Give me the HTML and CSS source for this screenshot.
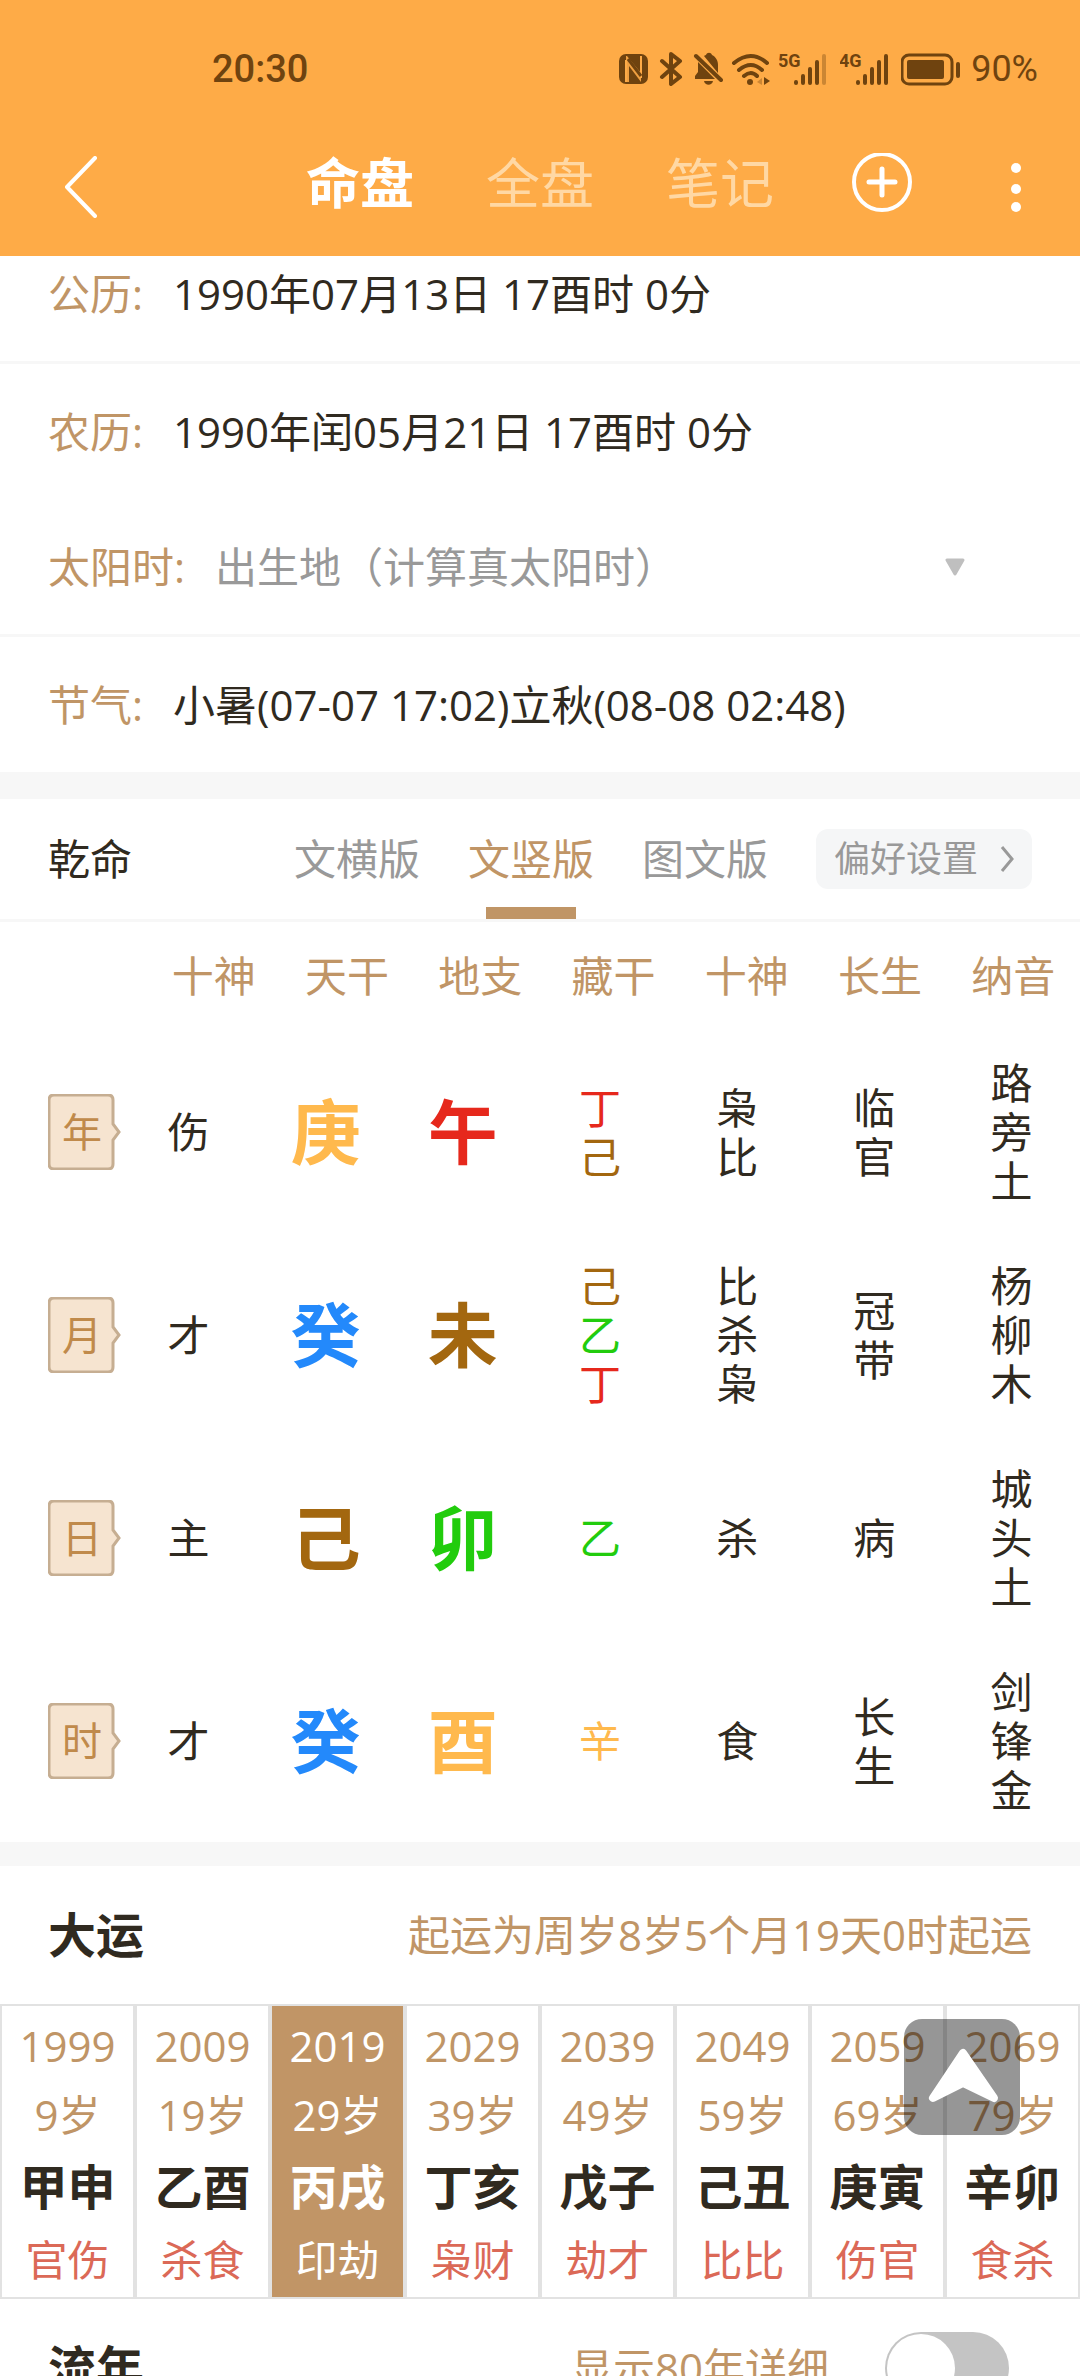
FILE: index.html
```html
<!DOCTYPE html>
<html lang="zh-CN">
<head>
<meta charset="utf-8">
<meta name="viewport" content="width=device-width, initial-scale=1">
<title>命盘</title>
<link rel="stylesheet" href="styles.css">
</head>
<body>
<div class="app">
  <header class="top">
    <div class="status">
      <span class="clock">20:30</span>
      <div class="status-icons">
        <svg width="31" height="34" viewBox="0 0 31 34" aria-hidden="true">
          <rect x="1" y="2" width="29" height="30" rx="7" fill="currentColor"/>
          <path d="M8 30V8M23 4v22" fill="none" stroke="#feab47" stroke-width="2"/>
          <path d="M9 4l14 17v9L11 14v16H8V4z" fill="#feab47" opacity=".9"/>
          <path d="M10 7l13 17" stroke="currentColor" stroke-width="3"/>
        </svg>
        <svg width="24" height="34" viewBox="0 0 24 34" aria-hidden="true">
          <path d="M3 9l18 16-9 7V2l9 7L3 25" fill="none" stroke="currentColor" stroke-width="4" stroke-linejoin="round" stroke-linecap="round"/>
        </svg>
        <svg width="30" height="34" viewBox="0 0 30 34" aria-hidden="true">
          <path d="M11 4c1-1 2-1 2-1 1-3 5-3 6 0 4 2 6 6 6 10v8zM5 10l17 17H2v-3l3-4z" fill="currentColor"/>
          <path d="M11 29h9c-1 5-8 5-9 0z" fill="currentColor"/>
          <path d="M3 4l25 24" stroke="currentColor" stroke-width="4" stroke-linecap="round"/>
        </svg>
        <svg width="36" height="34" viewBox="0 0 36 34" class="spill" aria-hidden="true">
          <path d="M1 11q17-14 33 0M6 18q12-10 23 0M11 24q7-6 13 0" fill="none" stroke="currentColor" stroke-width="4" stroke-linecap="round"/>
          <circle cx="17" cy="30" r="3" fill="currentColor"/>
          <path d="M29 26v7l-5-3z" fill="currentColor" opacity=".35"/>
          <path d="M31 25v8l6-4z" fill="currentColor"/>
        </svg>
        <svg width="51" height="34" viewBox="0 0 51 34" aria-hidden="true">
          <text x="-1" y="15" class="net">5G</text>
          <path d="M17 30v1M24 24v7M31 17v14M38 10v21" stroke="currentColor" stroke-width="4" stroke-linecap="round"/>
          <path d="M45 4v27" stroke="currentColor" stroke-width="4" stroke-linecap="round" opacity=".35"/>
        </svg>
        <svg width="51" height="34" viewBox="0 0 51 34" aria-hidden="true">
          <text x="-1" y="15" class="net">4G</text>
          <path d="M18 30v1M25 24v7M32 17v14M39 10v21M46 4v27" stroke="currentColor" stroke-width="4" stroke-linecap="round"/>
        </svg>
        <svg width="60" height="34" viewBox="0 0 60 34" aria-hidden="true">
          <rect x="1" y="3" width="50" height="29" rx="7" fill="none" stroke="currentColor" stroke-width="3"/>
          <rect x="6" y="8" width="37" height="19" rx="2" fill="currentColor"/>
          <path d="M57 12v12" stroke="currentColor" stroke-width="4" stroke-linecap="round"/>
        </svg>
        <span class="battery">90%</span>
      </div>
    </div>
    <div class="nav">
      <button class="icon-btn back" aria-label="返回">
        <svg width="34" height="62" viewBox="0 0 34 62"><path d="M31 2L3 31l28 29" fill="none" stroke="#fff" stroke-width="4" stroke-linecap="round" stroke-linejoin="round"/></svg>
      </button>
      <nav class="pages">
        <a href="#chart" class="page active">命盘</a>
        <a href="#full" class="page">全盘</a>
        <a href="#notes" class="page">笔记</a>
      </nav>
      <button class="icon-btn" aria-label="新增">
        <svg width="60" height="60" viewBox="0 0 60 60"><circle cx="30" cy="29" r="28" fill="none" stroke="#fff" stroke-width="4"/><path d="M30 16v26M17 29h26" stroke="#fff" stroke-width="5" stroke-linecap="round"/></svg>
      </button>
      <button class="icon-btn" aria-label="更多">
        <svg width="50" height="60" viewBox="0 0 50 60"><g fill="#fff"><circle cx="26" cy="15" r="5"/><circle cx="26" cy="36" r="5"/><circle cx="26" cy="54" r="5"/></g></svg>
      </button>
    </div>
  </header>

  <main class="content">
    <section class="info">
      <div class="info-row first"><span class="label">公历:</span><span>1990年07月13日 17酉时 0分</span></div>
      <div class="info-row plain"><span class="label">农历:</span><span>1990年闰05月21日 17酉时 0分</span></div>
      <div class="info-row">
        <label class="label" for="place">太阳时:</label>
        <select id="place" class="place"><option>出生地（计算真太阳时）</option></select>
        <svg class="caret" width="20" height="18" viewBox="0 0 20 18" aria-hidden="true"><path d="M2 2h16l-8 14z" fill="#bfbfbf" stroke="#bfbfbf" stroke-width="3" stroke-linejoin="round"/></svg>
      </div>
      <div class="info-row last"><span class="label">节气:</span><span>小暑(07-07 17:02)立秋(08-08 02:48)</span></div>
    </section>

    <section class="chart" id="chart">
      <div class="views">
        <span class="sex">乾命</span>
        <div class="view-tabs">
          <button class="view">文横版</button>
          <button class="view active">文竖版</button>
          <button class="view">图文版</button>
        </div>
        <button class="prefs">偏好设置
          <svg width="14" height="28" viewBox="0 0 14 28" aria-hidden="true"><path d="M2 2l10 12L2 26" fill="none" stroke="#999" stroke-width="3"/></svg>
        </button>
      </div>

      <table class="pillars">
        <thead>
          <tr><td></td><th scope="col">十神</th><th scope="col">天干</th><th scope="col">地支</th><th scope="col">藏干</th><th scope="col">十神</th><th scope="col">长生</th><th scope="col">纳音</th></tr>
        </thead>
        <tbody>
          <tr>
            <th scope="row"><span class="tag"><svg width="74" height="76" viewBox="0 0 74 76" aria-hidden="true"><path class="tag-shape" d="M6 1h54q5 0 5 5v24l6 8-6 8v24q0 5-5 5H6q-5 0-5-5V6q0-5 5-5z"/></svg><span>年</span></span></th>
            <td>伤</td><td class="big metal">庚</td><td class="big fire">午</td>
            <td><span class="stack"><span class="fire">丁</span><span class="earth">己</span></span></td>
            <td><span class="stack"><span>枭</span><span>比</span></span></td>
            <td><span class="stack"><span>临</span><span>官</span></span></td>
            <td><span class="stack"><span>路</span><span>旁</span><span>土</span></span></td>
          </tr>
          <tr>
            <th scope="row"><span class="tag"><svg width="74" height="76" viewBox="0 0 74 76" aria-hidden="true"><path class="tag-shape" d="M6 1h54q5 0 5 5v24l6 8-6 8v24q0 5-5 5H6q-5 0-5-5V6q0-5 5-5z"/></svg><span>月</span></span></th>
            <td>才</td><td class="big water">癸</td><td class="big earth">未</td>
            <td><span class="stack"><span class="earth">己</span><span class="wood">乙</span><span class="fire">丁</span></span></td>
            <td><span class="stack"><span>比</span><span>杀</span><span>枭</span></span></td>
            <td><span class="stack"><span>冠</span><span>带</span></span></td>
            <td><span class="stack"><span>杨</span><span>柳</span><span>木</span></span></td>
          </tr>
          <tr>
            <th scope="row"><span class="tag"><svg width="74" height="76" viewBox="0 0 74 76" aria-hidden="true"><path class="tag-shape" d="M6 1h54q5 0 5 5v24l6 8-6 8v24q0 5-5 5H6q-5 0-5-5V6q0-5 5-5z"/></svg><span>日</span></span></th>
            <td>主</td><td class="big earth">己</td><td class="big wood">卯</td>
            <td class="wood">乙</td>
            <td>杀</td>
            <td>病</td>
            <td><span class="stack"><span>城</span><span>头</span><span>土</span></span></td>
          </tr>
          <tr>
            <th scope="row"><span class="tag"><svg width="74" height="76" viewBox="0 0 74 76" aria-hidden="true"><path class="tag-shape" d="M6 1h54q5 0 5 5v24l6 8-6 8v24q0 5-5 5H6q-5 0-5-5V6q0-5 5-5z"/></svg><span>时</span></span></th>
            <td>才</td><td class="big water">癸</td><td class="big metal">酉</td>
            <td class="metal">辛</td>
            <td>食</td>
            <td><span class="stack"><span>长</span><span>生</span></span></td>
            <td><span class="stack"><span>剑</span><span>锋</span><span>金</span></span></td>
          </tr>
        </tbody>
      </table>
    </section>

    <section class="luck">
      <div class="section-head"><h2>大运</h2><span>起运为周岁8岁5个月19天0时起运</span></div>
      <div class="decades">
        <button class="decade"><span>1999</span><span>9岁</span><b>甲申</b><em>官伤</em></button>
        <button class="decade"><span>2009</span><span>19岁</span><b>乙酉</b><em>杀食</em></button>
        <button class="decade active"><span>2019</span><span>29岁</span><b>丙戌</b><em>印劫</em></button>
        <button class="decade"><span>2029</span><span>39岁</span><b>丁亥</b><em>枭财</em></button>
        <button class="decade"><span>2039</span><span>49岁</span><b>戊子</b><em>劫才</em></button>
        <button class="decade"><span>2049</span><span>59岁</span><b>己丑</b><em>比比</em></button>
        <button class="decade"><span>2059</span><span>69岁</span><b>庚寅</b><em>伤官</em></button>
        <button class="decade"><span>2069</span><span>79岁</span><b>辛卯</b><em>食杀</em></button>
      </div>
      <div class="section-head years"><h2>流年</h2><label for="all-years">显示80年详细</label><input type="checkbox" class="switch" id="all-years"></div>
    </section>
  </main>

  <button class="to-top" aria-label="回到顶部">
    <svg width="116" height="116" viewBox="0 0 116 116"><path d="M59 34L29 79l30-15 31 15z" fill="#fff" stroke="#fff" stroke-width="8" stroke-linejoin="round"/></svg>
  </button>
</div>
</body>
</html>
```

FILE: styles.css
```css
:root {
  --orange: #feab47;
  --tan: #c09566;
  --ink: #302a20;
  --grey: #999;
  --line: #f7f7f7;
}

* { box-sizing: border-box; }

body {
  margin: 0;
  background: #fff;
  color: var(--ink);
  font: 42px/60px "Open Sans", "Noto Sans CJK SC", sans-serif;
}

button, select {
  margin: 0;
  padding: 0;
  border: 0;
  background: none;
  color: inherit;
  font: inherit;
}

svg { display: block; flex: none; }

.app {
  display: flex;
  flex-direction: column;
  height: 100vh;
}

/* Header */
.top { flex: none; background: var(--orange); }

.status {
  display: flex;
  align-items: center;
  justify-content: space-between;
  height: 110px;
  padding: 28px 42px 0 212px;
  color: #6f430f;
}

.clock { font: 500 38px/48px Roboto, sans-serif; }
.status-icons { display: flex; align-items: center; gap: 10px; }
.battery { font: 400 36px/48px Roboto, sans-serif; }
.net { font: 700 18px Roboto, sans-serif; fill: currentColor; }
.spill { overflow: visible; }

.nav {
  display: flex;
  align-items: center;
  gap: 78px;
  height: 146px;
  padding: 0 40px 0 64px;
}

.icon-btn { display: flex; }
.back { margin-right: auto; padding-top: 8px; }
.pages { display: flex; gap: 72px; }

.page {
  color: #ffd8a4;
  font-size: 54px;
  line-height: 72px;
  text-decoration: none;
}

.page.active { color: #fff; font-weight: 700; }

/* Scrolling content */
.content {
  flex: 1;
  min-height: 0;
  overflow: hidden auto;
  scrollbar-width: none;
}

.info-row {
  display: flex;
  align-items: center;
  gap: 30px;
  min-height: 138px;
  padding: 0 48px;
  border-bottom: 3px solid var(--line);
}

.info-row.first { min-height: 108px; padding-bottom: 29px; }
.info-row.plain, .info-row.last { min-height: 135px; border-bottom: 0; }
.label { color: var(--tan); }

.place {
  flex: 1;
  appearance: none;
  color: var(--grey);
  height: 60px;
}

.caret { margin-right: 67px; }

.chart { border-top: 27px solid var(--line); }

.views {
  display: flex;
  align-items: center;
  gap: 48px;
  height: 123px;
  padding: 0 48px;
  border-bottom: 3px solid var(--line);
}

.view-tabs {
  display: flex;
  gap: 48px;
  height: 100%;
  margin-left: auto;
}

.view { position: relative; color: var(--grey); }
.view.active { color: var(--tan); }

.view.active::after {
  content: "";
  position: absolute;
  bottom: 0;
  left: 18px;
  right: 18px;
  height: 12px;
  background: var(--tan);
}

.prefs {
  display: flex;
  align-items: center;
  justify-content: space-between;
  width: 216px;
  height: 60px;
  padding: 0 18px;
  border-radius: 12px;
  background: #f5f6f7;
  color: var(--grey);
  font-size: 36px;
}

/* Four pillars */
.pillars, .pillars thead, .pillars tbody { display: block; }

.pillars tr {
  display: grid;
  grid-template-columns: 120px repeat(7, 1fr);
  align-items: center;
  min-height: 203px;
}

.pillars thead tr {
  grid-template-columns: 147px repeat(7, 1fr);
  min-height: 108px;
}

.pillars td, .pillars th { padding: 0; font-weight: 400; text-align: center; }
.pillars thead th { color: var(--tan); }
.pillars .big { font-size: 70px; font-weight: 700; line-height: 96px; }

.tag {
  display: grid;
  align-items: center;
  margin-left: 48px;
  color: #c08a4b;
  font-size: 40px;
}

.tag svg, .tag span { grid-area: 1 / 1; }
.tag span { width: 68px; }
.tag-shape { fill: #f6e4d0; stroke: #c6ae92; stroke-width: 3; }

.stack { display: flex; flex-direction: column; line-height: 49px; }

.metal { color: #ffb94d; }
.fire { color: #e6281c; }
.earth { color: #a3670f; }
.water { color: #2389fb; }
.wood { color: #22cc0d; }

/* Luck decades */
.luck { border-top: 24px solid var(--line); }

.section-head {
  display: flex;
  align-items: center;
  justify-content: space-between;
  height: 138px;
  padding: 0 48px;
  color: var(--tan);
}

.section-head h2 {
  margin: 0;
  color: var(--ink);
  font-size: 48px;
  font-weight: 700;
}

.decades { display: grid; grid-template-columns: repeat(8, 1fr); }

.decade {
  display: flex;
  flex-direction: column;
  align-items: center;
  padding: 5px 0 3px;
  border: 2px solid #e2e2e2;
  color: var(--tan);
  line-height: 69px;
}

.decade b { color: var(--ink); font-size: 48px; line-height: 76px; }
.decade em { color: #db6957; font-style: normal; }
.decade.active { background: #c19566; }
.decade.active, .decade.active b, .decade.active em { color: #fff; }

.years { padding-right: 71px; }
.years label { margin-left: auto; margin-right: 56px; }

.switch {
  display: flex;
  appearance: none;
  width: 124px;
  height: 72px;
  margin: 0;
  padding: 2px;
  border-radius: 36px;
  background: #c4c4c4;
}

.switch::before {
  content: "";
  width: 68px;
  height: 68px;
  border-radius: 50%;
  background: #fff;
}

.switch:checked { justify-content: flex-end; background: var(--tan); }

.to-top {
  position: fixed;
  right: 60px;
  bottom: 241px;
  border-radius: 18px;
  background: rgba(0, 0, 0, .41);
}
```
